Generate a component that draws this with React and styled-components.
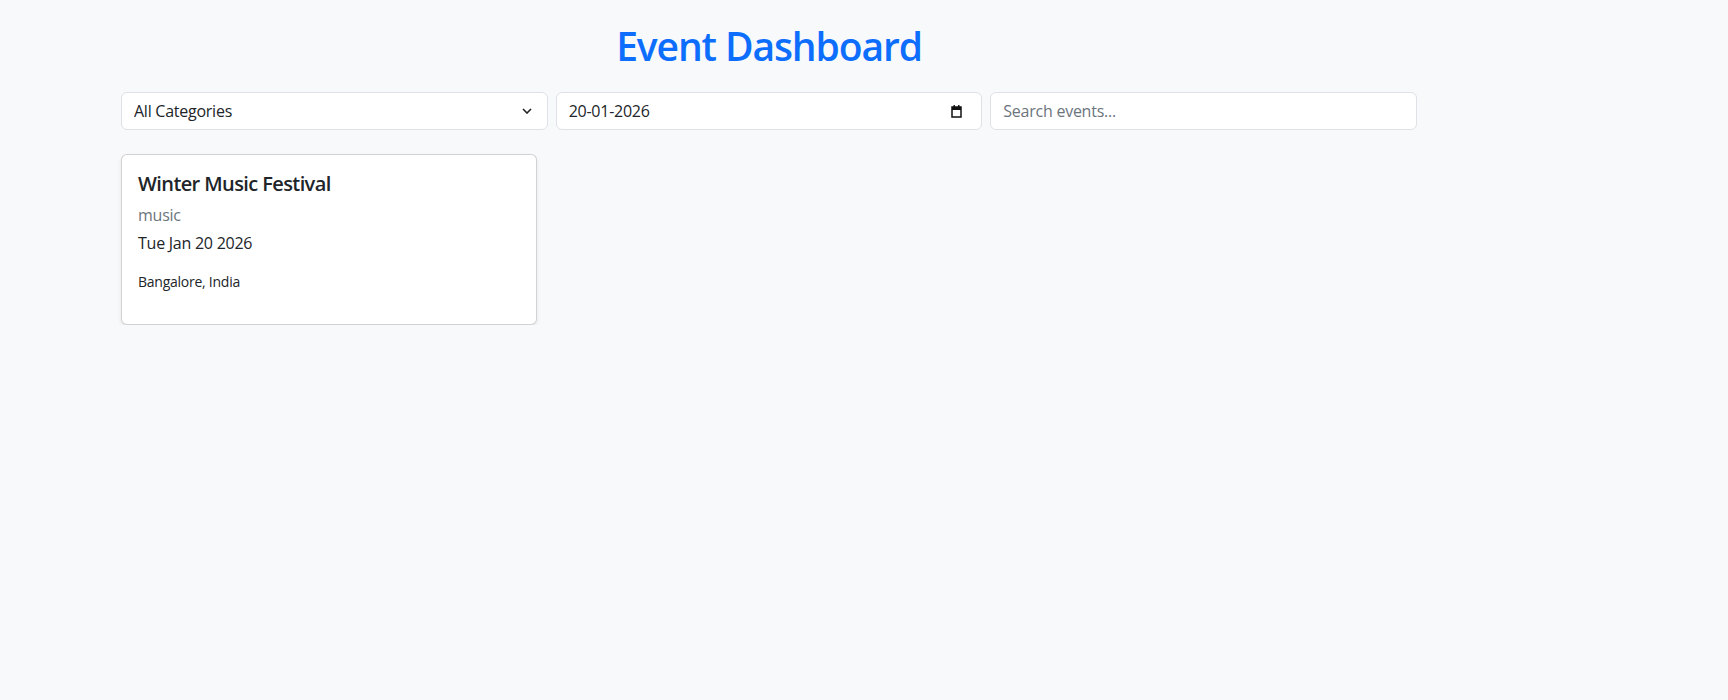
import React, { useState } from 'react';
import styled, { createGlobalStyle } from 'styled-components';

const GlobalStyle = createGlobalStyle`
  * {
    box-sizing: border-box;
  }
  body {
    margin: 0;
    background-color: #f8f9fa;
    color: #212529;
    font-family: "Open Sans", "Noto Sans", sans-serif;
    font-size: 16px;
    line-height: 1.5;
    letter-spacing: -0.25px;
  }
`;

const Container = styled.div`
  width: 1296px;
  margin-left: 121px;
  padding-top: 22px;
`;

const Title = styled.h1`
  margin: 0 0 22px;
  text-align: center;
  color: #0d6efd;
  font-size: 39px;
  font-weight: 600;
  line-height: 1.23;
  letter-spacing: -1.1px;
`;

const Filters = styled.div`
  display: grid;
  grid-template-columns: repeat(3, 1fr);
  column-gap: 8px;
  margin-bottom: 24px;
`;

const Field = styled.label`
  display: flex;
  align-items: center;
  height: 38px;
  padding: 0 ${(p) => p.$padRight || 12}px 0 12px;
  background: #fff;
  border: 1px solid #dee2e6;
  border-radius: 6px;
`;

const Select = styled.select`
  flex: 1;
  min-width: 0;
  height: 100%;
  padding: 0;
  border: none;
  outline: none;
  background: transparent;
  appearance: none;
  font: inherit;
  letter-spacing: inherit;
  color: #212529;
`;

const TextInput = styled.input`
  flex: 1;
  min-width: 0;
  height: 100%;
  padding: 0;
  border: none;
  outline: none;
  background: transparent;
  font: inherit;
  letter-spacing: inherit;
  color: #212529;

  &::placeholder {
    color: #6c757d;
    opacity: 1;
  }
`;

const Grid = styled.div`
  display: grid;
  grid-template-columns: repeat(3, 1fr);
  gap: 24px;
`;

const Card = styled.div`
  background: #fff;
  border: 1px solid rgba(0, 0, 0, 0.175);
  border-radius: 6px;
  box-shadow: 0 2px 4px rgba(0, 0, 0, 0.075);
  padding: 17px 16px 16px;
`;

const CardTitle = styled.h5`
  margin: 0 0 7px;
  font-size: 20px;
  font-weight: 600;
  line-height: 1.2;
  letter-spacing: -0.6px;
`;

const CardText = styled.p`
  margin: 0 0 ${(p) => p.$gap}px;
  font-size: ${(p) => p.$size || 16}px;
  line-height: 1.5;
  color: ${(p) => (p.$muted ? '#6c757d' : '#212529')};
`;

const Chevron = () => (
  <svg width="10" height="6" viewBox="0 0 10 6" fill="none">
    <path d="M1 1l4 4 4-4" stroke="#222" strokeWidth="1.6" />
  </svg>
);

const CalendarIcon = () => (
  <svg width="11" height="14" viewBox="0 0 11 14">
    <rect x="1" y="3" width="9" height="10" fill="none" stroke="#111" strokeWidth="1.5" />
    <rect x="1" y="3" width="9" height="3" fill="#111" />
    <rect x="2.5" y="1" width="1.4" height="2.5" fill="#111" />
    <rect x="7.1" y="1" width="1.4" height="2.5" fill="#111" />
  </svg>
);

const events = [
  {
    id: 1,
    title: 'Winter Music Festival',
    category: 'music',
    date: 'Tue Jan 20 2026',
    location: 'Bangalore, India',
  },
];

export default function App() {
  const [category, setCategory] = useState('all');
  const [query, setQuery] = useState('');

  return (
    <>
      <GlobalStyle />
      <Container>
        <Title>Event Dashboard</Title>
        <Filters>
          <Field $padRight={15}>
            <Select value={category} onChange={(e) => setCategory(e.target.value)}>
              <option value="all">All Categories</option>
              <option value="music">Music</option>
              <option value="tech">Tech</option>
              <option value="sports">Sports</option>
            </Select>
            <Chevron />
          </Field>
          <Field $padRight={19}>
            <TextInput type="text" defaultValue="20-01-2026" />
            <CalendarIcon />
          </Field>
          <Field>
            <TextInput
              type="text"
              placeholder="Search events..."
              value={query}
              onChange={(e) => setQuery(e.target.value)}
            />
          </Field>
        </Filters>
        <Grid>
          {events.map((ev) => (
            <Card key={ev.id}>
              <CardTitle>{ev.title}</CardTitle>
              <CardText $muted $gap={4}>{ev.category}</CardText>
              <CardText $gap={16}>{ev.date}</CardText>
              <CardText $size={14} $gap={16}>{ev.location}</CardText>
            </Card>
          ))}
        </Grid>
      </Container>
    </>
  );
}
